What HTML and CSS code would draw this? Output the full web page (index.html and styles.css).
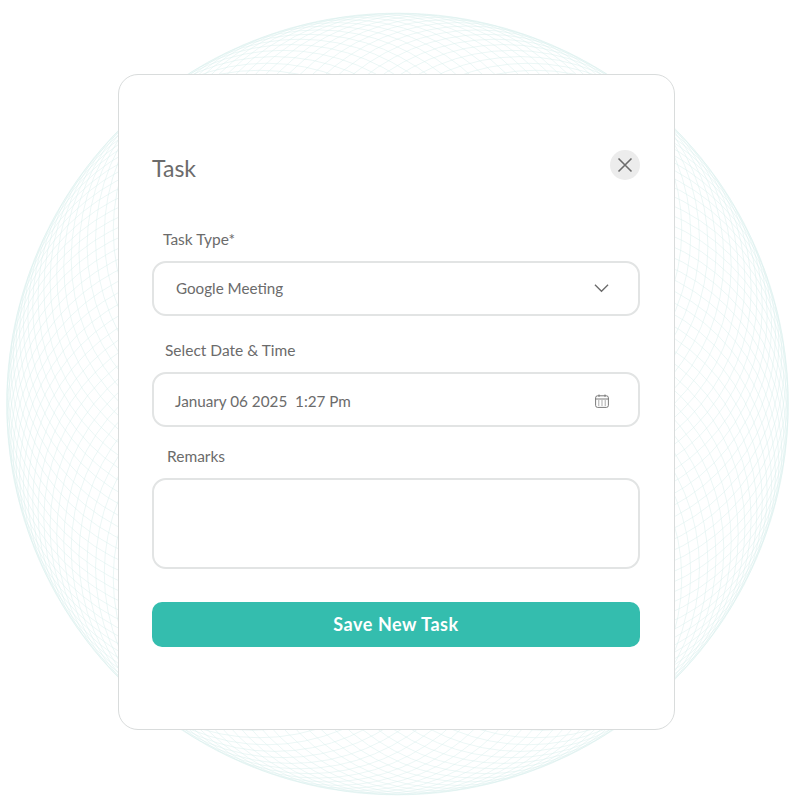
FILE: index.html
```html
<!DOCTYPE html>
<html lang="en">
<head>
<meta charset="utf-8">
<title>Task</title>
<link rel="stylesheet" href="styles.css">
</head>
<body>
<svg class="guilloche" id="guilloche" viewBox="0 0 792 807" aria-hidden="true"></svg>
<main class="card">
  <header class="card-head">
    <h1 class="title">Task</h1>
    <button class="close" type="button" aria-label="Close">
      <svg viewBox="0 0 30 30" class="close-icon"><path d="M8.5 8.5l13 13M21.5 8.5l-13 13"/></svg>
    </button>
  </header>
  <label class="label label-type">Task Type*</label>
  <div class="field field-select">
    <span class="value value-type">Google Meeting</span>
    <svg viewBox="0 0 16 10" class="chevron"><path d="M1 1.5l7 7 7-7"/></svg>
  </div>
  <label class="label label-date">Select Date &amp; Time</label>
  <div class="field field-date">
    <span class="value value-date">January 06 2025&nbsp; 1:27 Pm</span>
    <svg viewBox="0 0 14 14" class="calendar">
      <rect x="0.6" y="1.8" width="12.8" height="11.6" rx="2"/>
      <path d="M0.6 5h12.8M4 0.5v2.4M10 0.5v2.4"/>
      <path class="dots" d="M3 7h1.4M6.3 7h1.4M9.6 7h1.4M3 9h1.4M6.3 9h1.4M9.6 9h1.4M3 11h1.4M6.3 11h1.4M9.6 11h1.4"/>
    </svg>
  </div>
  <label class="label label-remarks">Remarks</label>
  <div class="field field-remarks"></div>
  <button class="save" type="button">Save New Task</button>
</main>
<script src="guilloche.js"></script>
</body>
</html>
```
FILE: styles.css
```css
* { box-sizing: border-box; }
html, body { margin: 0; padding: 0; }
body {
  width: 792px;
  height: 807px;
  overflow: hidden;
  background: #fff;
  position: relative;
  font-family: "Lato", "Noto Sans", sans-serif;
  color: #6b6b6b;
}
.guilloche {
  position: absolute;
  left: 0;
  top: 0;
  width: 792px;
  height: 807px;
}
.guilloche circle {
  fill: none;
  stroke: #d9efec;
  stroke-width: 0.5;
}
.card {
  position: absolute;
  left: 118px;
  top: 74px;
  width: 557px;
  height: 656px;
  padding: 0 34px 0 33px;
  background: #fff;
  border: 1px solid #d9dcdc;
  border-radius: 20px;
}
.card-head {
  display: flex;
  justify-content: space-between;
  align-items: flex-start;
  height: 154px;
  padding-top: 75px;
}
.title {
  margin: 4px 0 0;
  font-size: 23px;
  line-height: 28px;
  font-weight: 400;
  color: #6b6b6b;
}
.close {
  width: 30px;
  height: 30px;
  padding: 0;
  border: 0;
  border-radius: 50%;
  background: #ececec;
}
.close-icon { display: block; width: 30px; height: 30px; }
.close-icon path { fill: none; stroke: #6b6b6b; stroke-width: 1.6; }
.label {
  display: block;
  font-size: 15.5px;
  line-height: 20px;
  color: #6b6b6b;
}
.label-type { padding-left: 11px; }
.label-date { padding-left: 13px; margin-top: 24px; }
.label-remarks { padding-left: 15px; margin-top: 19px; }
.field {
  display: flex;
  align-items: center;
  justify-content: space-between;
  width: 488px;
  border: 2px solid #e2e4e4;
  border-radius: 14px;
  background: #fff;
}
.field-select { height: 55px; margin-top: 12px; padding: 0 29px 2px 22px; }
.field-date { height: 55px; margin-top: 12px; padding: 2px 29px 0 21px; }
.field-remarks { height: 91px; margin-top: 12px; }
.value { font-size: 15.2px; line-height: 20px; color: #6b6b6b; }
.value-date { font-size: 15.25px; }
.chevron { width: 15px; height: 10px; display: block; }
.chevron path { fill: none; stroke: #6b6b6b; stroke-width: 1.4; }
.calendar { width: 14px; height: 14px; display: block; }
.calendar rect, .calendar path { fill: none; stroke: #6b6b6b; stroke-width: 0.9; }
.calendar .dots { stroke-width: 1; stroke: #888; }
.save {
  display: block;
  width: 488px;
  height: 45px;
  margin-top: 33px;
  padding: 0 0 2px;
  border: 0;
  border-radius: 10px;
  background: #34bdae;
  color: #fff;
  font-family: inherit;
  font-size: 18px;
  font-weight: 700;
  letter-spacing: 0.55px;
}
```
FILE: guilloche.js
```js
var svg = document.getElementById('guilloche');
var ns = 'http://www.w3.org/2000/svg';
var cx = 397.5, cy = 404, r = 195.5, n = 120;
for (var i = 0; i < n; i++) {
  var a = i / n * Math.PI * 2;
  var c = document.createElementNS(ns, 'circle');
  c.setAttribute('cx', (cx + r * Math.cos(a)).toFixed(2));
  c.setAttribute('cy', (cy + r * Math.sin(a)).toFixed(2));
  c.setAttribute('r', r);
  svg.appendChild(c);
}
```
